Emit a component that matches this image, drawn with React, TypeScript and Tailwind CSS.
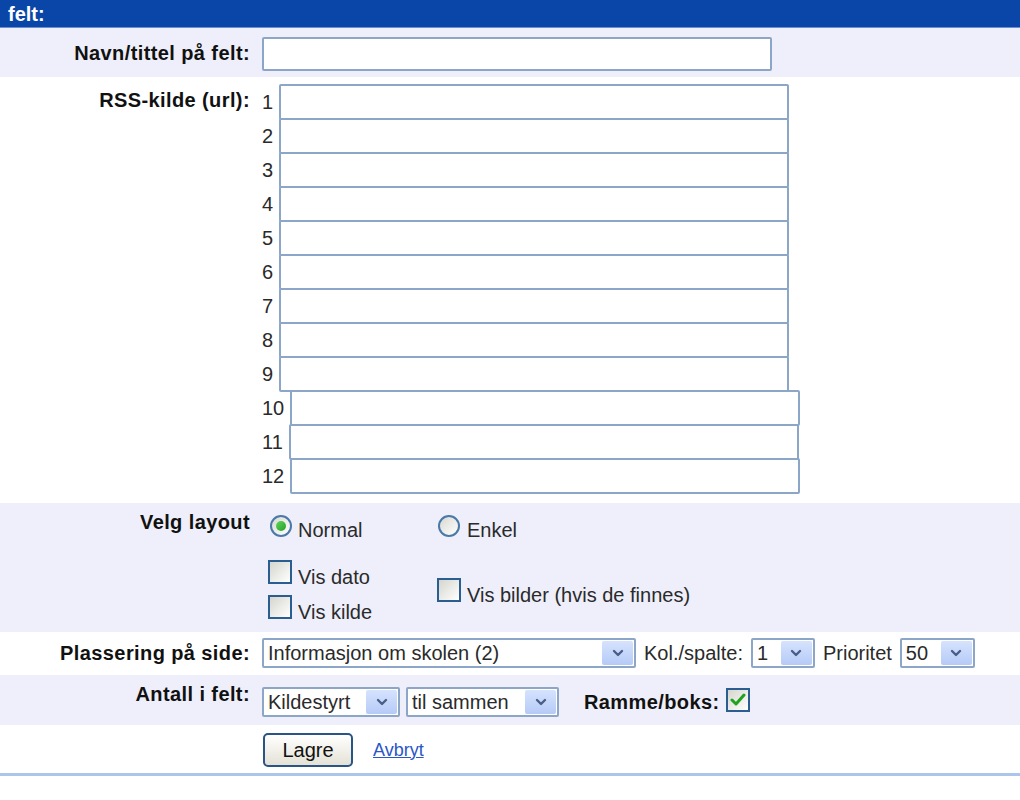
import React from "react"

function Chevron() {
  return (
    <svg width="12" height="8" viewBox="0 0 12 8" aria-hidden="true">
      <path d="M2 2l4 4 4-4" fill="none" stroke="#4a5f87" strokeWidth="2.4" strokeLinecap="round" strokeLinejoin="round" />
    </svg>
  )
}

function Select({ value, className }: { value: string; className: string }) {
  return (
    <div className={`flex h-[30px] items-center justify-between rounded-[2px] border-2 border-[#8ba6c6] bg-white pl-[4px] pr-[1px] ${className}`}>
      <span className="text-[20px] leading-[23px] text-[#2a2a2a]">{value}</span>
      <div className="flex h-[24px] w-[31px] items-center justify-center rounded-[2px] bg-gradient-to-b from-[#d6e3fe] to-[#b5caf6]">
        <Chevron />
      </div>
    </div>
  )
}

function Radio({ checked }: { checked?: boolean }) {
  return (
    <span className="flex size-[22px] shrink-0 items-center justify-center rounded-full border-2 border-[#4a78a8] bg-gradient-to-br from-[#d9d9d2] to-white">
      {checked && <span className="size-[10px] rounded-full bg-gradient-to-br from-[#5ed65e] to-[#20a020]" />}
    </span>
  )
}

function Box({ checked }: { checked?: boolean }) {
  return (
    <span className="flex size-[24px] shrink-0 items-center justify-center border-2 border-[#2a5d90] bg-gradient-to-br from-[#d6d6ce] to-white">
      {checked && (
        <svg width="16" height="14" viewBox="0 0 16 14" aria-hidden="true">
          <path d="M2 7l4 4 8-9" fill="none" stroke="#1fa31f" strokeWidth="3" strokeLinecap="round" strokeLinejoin="round" />
        </svg>
      )}
    </span>
  )
}

export default function App() {
  const label = "pr-[12px] text-right text-[20px] font-bold leading-[23px] tracking-[0.4px] text-[#111]"
  const field = "rounded-[2px] border-2 border-[#8ba6c6] bg-white"
  return (
    <div className="min-h-[800px] bg-white font-['Liberation_Sans',Arial,sans-serif] text-[20px] text-[#2a2a2a]">
      <div className="flex h-[28px] items-center border-b border-[#6b8fd0] bg-[#0946a8] pl-[8px] text-[20px] font-bold text-white">felt:</div>

      <div className="grid h-[49px] grid-cols-[262px_1fr] items-center bg-[#eeeffa]">
        <div className={`${label} pt-[2px]`}>Navn/tittel på felt:</div>
        <input type="text" className={`mt-[2px] h-[34px] w-[510px] ${field}`} />
      </div>

      <div className="grid grid-cols-[262px_1fr] items-start pt-[7px] pb-[9px]">
        <div className={`${label} pt-[5px]`}>RSS-kilde (url):</div>
        <div className="flex flex-col">
          {Array.from({ length: 12 }, (_, i) => i + 1).map((n) => (
            <div key={n} className={`flex items-center ${n > 1 ? "-mt-[2px]" : ""}`}>
              <span className="leading-[23px]">{n}</span>
              <input type="text" className={`ml-[6px] h-[36px] w-[510px] ${field}`} />
            </div>
          ))}
        </div>
      </div>

      <div className="grid grid-cols-[262px_1fr] items-start bg-[#eeeffa] pb-[4px]">
        <div className={`${label} pt-[8px]`}>Velg layout</div>
        <div className="grid grid-cols-[169px_auto] pt-[10px] pl-[6px]">
          <div className="flex h-[45px] items-start">
            <span className="mt-[2px] ml-[2px]"><Radio checked /></span>
            <span className="ml-[6px] mt-[6px] leading-[23px]">Normal</span>
          </div>
          <div className="flex h-[45px] items-start">
            <span className="mt-[2px] ml-[1px]"><Radio /></span>
            <span className="ml-[7px] mt-[6px] leading-[23px]">Enkel</span>
          </div>
          <div className="flex flex-col">
            <div className="flex h-[35px] items-start">
              <span className="mt-[2px]"><Box /></span>
              <span className="ml-[6px] mt-[8px] leading-[23px]">Vis dato</span>
            </div>
            <div className="flex h-[35px] items-start">
              <span className="mt-[2px]"><Box /></span>
              <span className="ml-[6px] mt-[8px] leading-[23px]">Vis kilde</span>
            </div>
          </div>
          <div className="flex h-[35px] items-start self-center">
            <span className="mt-[2px]"><Box /></span>
            <span className="ml-[6px] mt-[8px] leading-[23px]">Vis bilder (hvis de finnes)</span>
          </div>
        </div>
      </div>

      <div className="grid grid-cols-[262px_1fr] items-center pt-[6px] pb-[7px]">
        <div className={label}>Plassering på side:</div>
        <div className="flex items-center gap-2">
          <Select value="Informasjon om skolen (2)" className="w-[374px]" />
          <span className="leading-[23px]">Kol./spalte:</span>
          <Select value="1" className="w-[64px]" />
          <span className="leading-[23px]">Prioritet</span>
          <Select value="50" className="w-[75px]" />
        </div>
      </div>

      <div className="grid h-[50px] grid-cols-[262px_1fr] items-start bg-[#eeeffa] pt-[12px]">
        <div className={`${label} -mt-[4px]`}>Antall i felt:</div>
        <div className="flex items-start">
          <Select value="Kildestyrt" className="w-[138px]" />
          <Select value="til sammen" className="ml-[6px] w-[153px]" />
          <span className="ml-[25px] mt-[4px] font-bold leading-[23px] tracking-[0.4px] text-[#111]">Ramme/boks:</span>
          <span className="ml-[6px] mt-[1px]"><Box checked /></span>
        </div>
      </div>

      <div className="grid h-[51px] grid-cols-[262px_1fr] items-start border-b-[3px] border-[#abc6ea] pt-[8px]">
        <div />
        <div className="flex items-center">
          <button className="ml-[1px] h-[34px] w-[90px] rounded-[5px] border-2 border-[#2a5486] bg-gradient-to-b from-white to-[#e4e2d6] text-[20px] leading-[23px] text-[#111]">Lagre</button>
          <a href="#" className="ml-[20px] text-[18px] text-[#2a56c6] underline">Avbryt</a>
        </div>
      </div>
    </div>
  )
}
